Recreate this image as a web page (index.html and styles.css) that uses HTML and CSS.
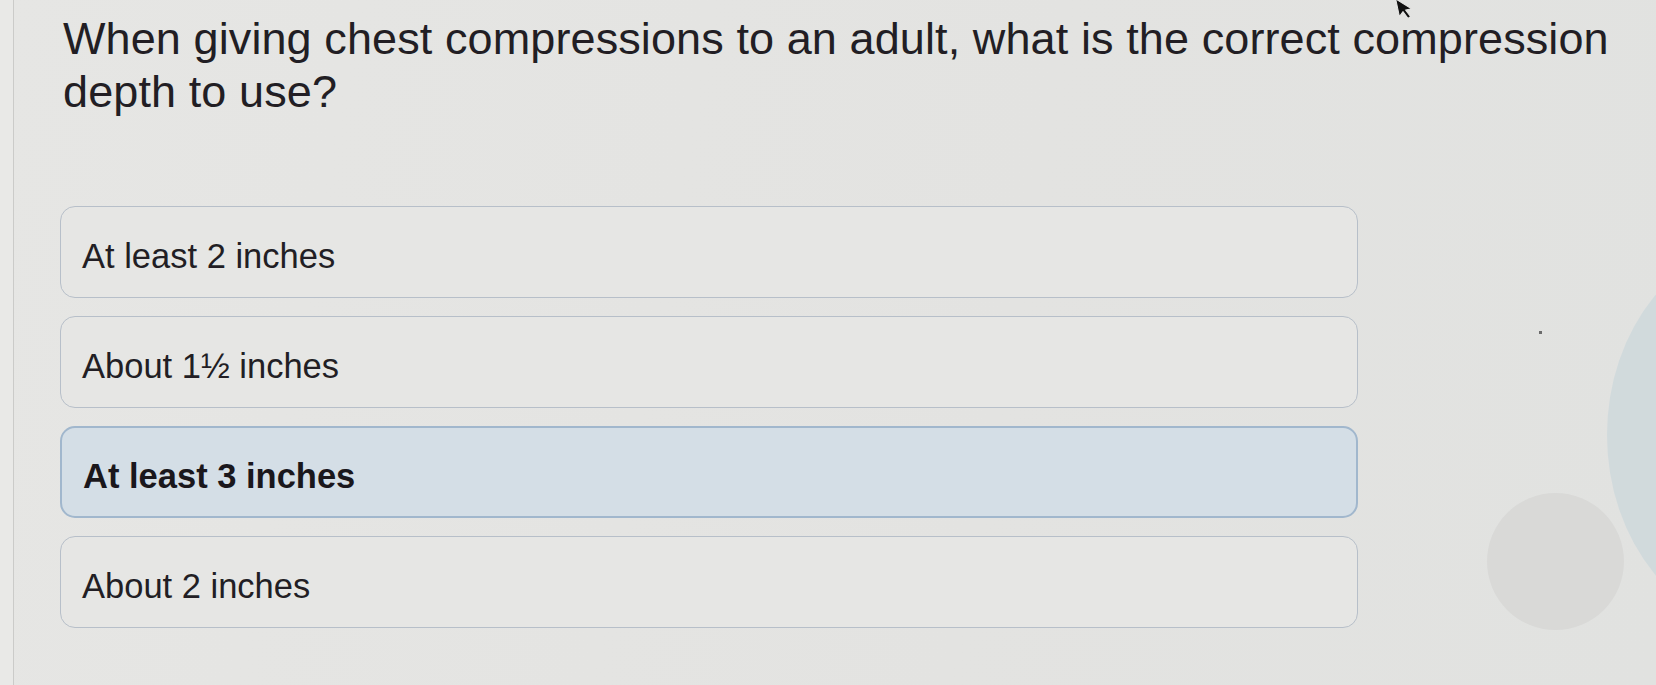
FILE: index.html
```html
<!DOCTYPE html>
<html lang="en">
<head>
    <meta charset="UTF-8">
    <meta name="viewport" content="width=device-width, initial-scale=1.0">
    <title>CPR Quiz</title>
    <link rel="stylesheet" href="styles.css">
</head>
<body>
    <div class="screen">
        <div class="side-edge"></div>
        <main class="quiz">
            <h1 class="question">When giving chest compressions to an adult, what is the correct compression depth to use?</h1>
            <div class="options">
                <div class="option">At least 2 inches</div>
                <div class="option">About 1&frac12; inches</div>
                <div class="option selected">At least 3 inches</div>
                <div class="option">About 2 inches</div>
            </div>
        </main>

        <!-- floating touch button and screen glare -->
        <div class="touch-button"></div>
        <div class="glare"></div>
        <div class="speck"></div>

        <svg class="pointer" width="20" height="26" viewBox="0 0 20 26">
            <path d="M2 1 L2 19 L6.5 15 L10 22.5 L12.8 21.3 L9.4 14 L15.5 14 Z" fill="#111" stroke="#e6e6e4" stroke-width="1"/>
        </svg>
    </div>
</body>
</html>
```

FILE: styles.css
```css
html, body {
    margin: 0;
    height: 100%;
}
body {
    background-color: #e4e4e2;
    font-family: "Liberation Sans", Arial, sans-serif;
    color: #221e24;
    overflow: hidden;
}
.screen {
    position: relative;
    display: flex;
    height: 100%;
    background: linear-gradient(100deg, #e6e6e4 0%, #e3e3e1 60%, #e1e2e0 100%);
}
.side-edge {
    width: 13px;
    flex-shrink: 0;
    background-color: #e9e9e7;
    border-right: 1px solid #cbcbc9;
}
.quiz {
    flex: 1;
    padding: 12px 0 0 46px;
}
.question {
    margin: 0 0 88px 3px;
    width: 1580px;
    font-size: 45px;
    font-weight: normal;
    line-height: 53px;
    letter-spacing: 0.1px;
}
.options {
    display: flex;
    flex-direction: column;
    gap: 18px;
    width: 1298px;
}
.option {
    display: flex;
    align-items: center;
    box-sizing: border-box;
    height: 92px;
    padding: 9px 0 0 21px;
    border: 1.5px solid #b7bfc9;
    border-radius: 15px;
    background-color: #e6e6e4;
    font-size: 34.5px;
}
.option.selected {
    border: 2.5px solid #a1b7cd;
    background-color: #d4dee6;
    font-weight: bold;
    color: #1a171c;
}
.touch-button {
    position: absolute;
    left: 1487px;
    top: 493px;
    width: 137px;
    height: 137px;
    border-radius: 50%;
    background-color: #d9d9d7;
}
.glare {
    position: absolute;
    left: 1607px;
    top: 240px;
    width: 320px;
    height: 390px;
    border-radius: 50%;
    background-color: #d1dadc;
}
.speck {
    position: absolute;
    left: 1539px;
    top: 331px;
    width: 3px;
    height: 3px;
    background-color: #6b6b6b;
}
.pointer {
    position: absolute;
    left: 1396px;
    top: -4px;
    transform: rotate(-12deg);
}
```
